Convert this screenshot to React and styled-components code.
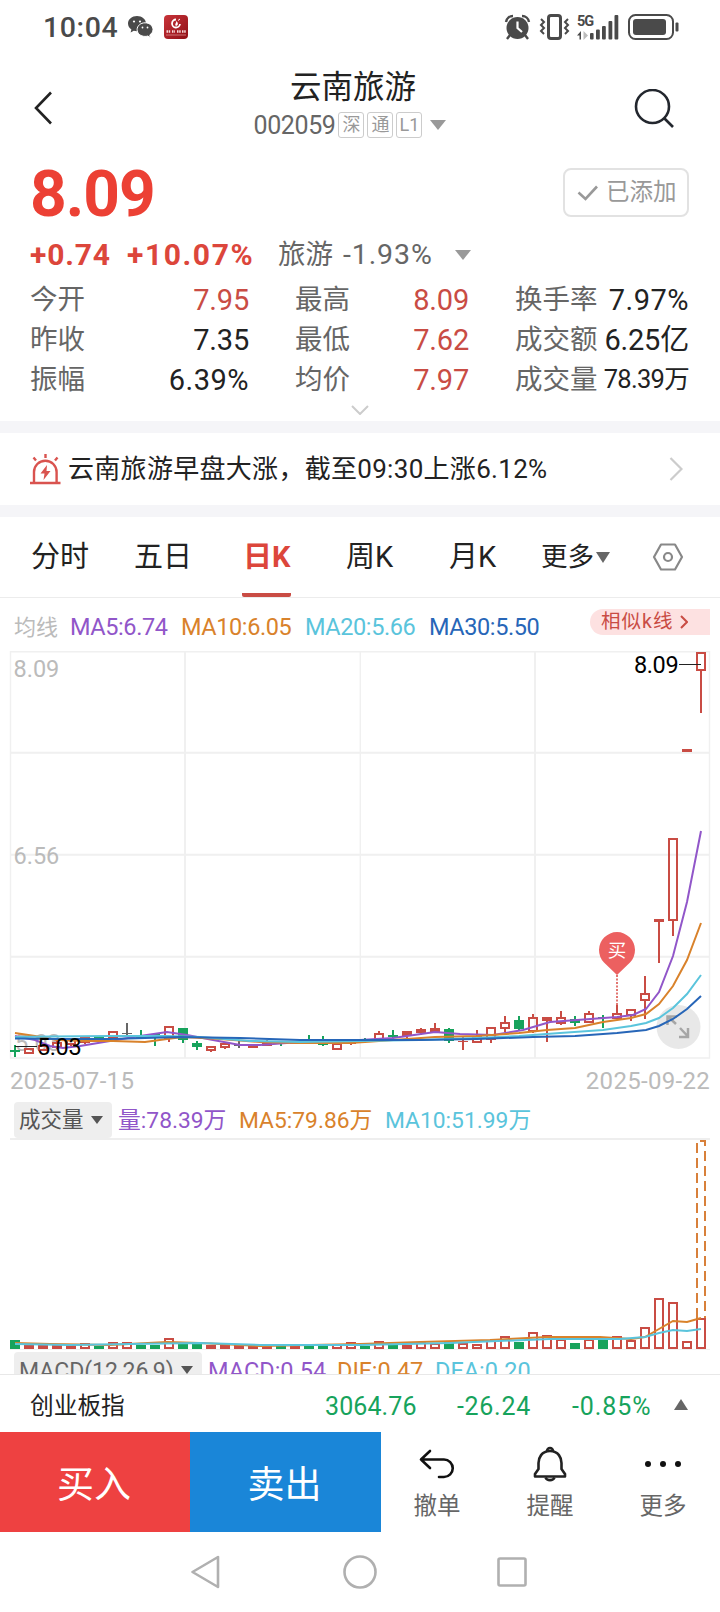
import React from "react";
import styled, { createGlobalStyle } from "styled-components";

const GlobalStyle = createGlobalStyle`
  * {
    box-sizing: border-box;
  }

  body {
    margin: 0;
    background: #fff;
    font-family: Roboto, "Noto Sans CJK SC", sans-serif;
    color: #222;
  }

  svg {
    display: block;
    flex-shrink: 0;
  }
`;

const RED = "#c94c44";
const GREEN = "#17a35c";
const PURPLE = "#9156c9";
const ORANGE = "#d9822b";
const CYAN = "#5ac4dc";
const BLUE = "#2766b8";

const Screen = styled.div`
  width: 720px;
  height: 1612px;
  display: flex;
  flex-direction: column;
  overflow: hidden;
`;

const Text = styled.span`
  display: block;
  width: ${(p) => (p.$w ? `${p.$w}px` : "auto")};
  padding-top: ${(p) => p.$top || 0}px;
  font-size: ${(p) => p.$size}px;
  line-height: 1;
  color: ${(p) => p.$color || "#222"};
  font-weight: ${(p) => p.$weight || 400};
  letter-spacing: ${(p) => p.$spacing || 0}px;
  white-space: nowrap;
`;

const StatusBar = styled.div`
  height: 54px;
  padding: 0 40px 0 43px;
  display: flex;
  align-items: center;
  justify-content: space-between;
`;
const StatusGroup = styled.div`
  display: flex;
  align-items: center;
  gap: 10px;
`;

const Header = styled.header`
  height: 102px;
  padding: 0 46px 0 34px;
  display: flex;
  justify-content: space-between;
`;
const HeaderIcon = styled.div`
  width: 60px;
  padding-top: ${(p) => p.$top}px;
  display: flex;
  justify-content: ${(p) => p.$align};
`;
const TitleBlock = styled.div`
  display: flex;
  flex-direction: column;
  align-items: center;
  padding: 18px 2px 0 0;
  gap: 8px;
`;
const CodeRow = styled.div`
  display: flex;
  align-items: center;
  margin-left: -6px;
`;
const Badge = styled.span`
  width: 26px;
  height: 26px;
  margin-left: 3px;
  border: 1px solid #ccc;
  border-radius: 3px;
  display: flex;
  align-items: center;
  justify-content: center;
  font-size: 18px;
  line-height: 1;
  color: #999;
`;
const Triangle = styled.i`
  width: 0;
  height: 0;
  border-left: ${(p) => p.$w / 2}px solid transparent;
  border-right: ${(p) => p.$w / 2}px solid transparent;
  ${(p) => (p.$up ? "border-bottom" : "border-top")}: ${(p) => p.$h}px solid ${(p) => p.$color || "#999"};
  margin-left: ${(p) => p.$left || 0}px;
`;

const Quote = styled.section`
  height: 265px;
  padding: 12px 31px 0 30px;
`;
const PriceRow = styled.div`
  height: 68px;
  display: flex;
  justify-content: space-between;
`;
const Price = styled(Text)`
  margin-top: -5px;
`;
const AddedButton = styled.button`
  width: 126px;
  height: 49px;
  padding: 0 0 0 12px;
  display: flex;
  align-items: center;
  gap: 7px;
  background: #fff;
  border: 2px solid #e2e2e2;
  border-radius: 8px;
  font-family: inherit;
`;
const ChangeRow = styled.div`
  height: 38px;
  display: flex;
  align-items: center;
`;
const Stats = styled.div`
  display: grid;
  grid-template-columns: 219px 174px 174px;
  grid-auto-rows: 40px;
  column-gap: 46px;
  margin-top: 6px;
`;
const Stat = styled.div`
  display: flex;
  align-items: center;
  justify-content: space-between;
`;
const Expand = styled.div`
  display: flex;
  justify-content: center;
  padding-top: 5px;
`;

const Band = styled.div`
  height: 12px;
  background: #f5f5f8;
`;
const Alert = styled.section`
  height: 72px;
  padding: 0 37px 0 30px;
  display: flex;
  align-items: center;
`;
const AlertText = styled.div`
  flex: 1;
  padding-left: 7px;
`;

const Tabs = styled.nav`
  height: 81px;
  border-bottom: 1px solid #ececec;
  padding: 0 36px 0 30px;
  display: flex;
`;
const Tab = styled.div`
  width: ${(p) => p.$w}px;
  height: 80px;
  display: flex;
  align-items: center;
`;
const TabLabel = styled.div`
  height: 80px;
  display: flex;
  align-items: center;
  border-bottom: 4px solid ${(p) => (p.$active ? RED : "transparent")};
  border-radius: 2px;
  padding: 5px 1px 0;
`;

const Legend = styled.div`
  height: ${(p) => p.$h}px;
  padding: ${(p) => p.$top || 0}px 10px 0 14px;
  display: flex;
  align-items: center;
`;
const LegendItem = styled(Text)`
  padding-top: 4px;
`;
const Similar = styled.div`
  width: 120px;
  height: 26px;
  margin-left: auto;
  margin-top: -8px;
  padding-left: 11px;
  display: flex;
  align-items: center;
  gap: 7px;
  background: #fde1e1;
  border-radius: 13px 0 0 13px;
`;
const Dates = styled.div`
  height: 41px;
  padding: 2px 10px 0;
  display: flex;
  align-items: center;
  justify-content: space-between;
`;
const Chip = styled.div`
  width: ${(p) => p.$w}px;
  height: 36px;
  margin-right: 6px;
  padding-left: 5px;
  display: flex;
  align-items: center;
  background: #eee;
  border-radius: 4px;
`;
const Clip = styled.div`
  height: 24px;
  overflow: hidden;
`;

const IndexBar = styled.div`
  height: 58px;
  border-top: 1px solid #e8e8e8;
  padding: 2px 30px 0;
  display: flex;
  align-items: center;
`;

const Actions = styled.div`
  height: 100px;
  display: flex;
`;
const Trade = styled.button`
  width: ${(p) => p.$w}px;
  border: 0;
  padding: 0 2px 1px 0;
  background: ${(p) => p.$bg};
  color: #fff;
  font-family: inherit;
  font-size: 37px;
`;
const Tools = styled.div`
  display: flex;
`;
const Tool = styled.div`
  width: 113px;
  padding: 13px 1px 0 0;
  display: flex;
  flex-direction: column;
  align-items: center;
  gap: 10px;
`;
const NavBar = styled.div`
  height: 80px;
  display: flex;
  align-items: center;
  justify-content: center;
  gap: 118px;
`;

const stats = [
  ["今开", "7.95", true],
  ["最高", "8.09", true],
  ["换手率", "7.97%"],
  ["昨收", "7.35"],
  ["最低", "7.62", true],
  ["成交额", "6.25亿"],
  ["振幅", "6.39%"],
  ["均价", "7.97", true],
  ["成交量", "78.39万"],
];

// kind, high, body top, body bottom, low, volume top
// r: hollow rise, s: filled rise, g: fall, x: flat
const candles = [
  ["g", 1045, 1050, 1052, 1057, 1340],
  ["r", 1048, 1049, 1053, 1053, 1346],
  ["r", 1044, 1046, 1050, 1050, 1346],
  ["r", 1041, 1043, 1047, 1049, 1346],
  ["r", 1039, 1040, 1044, 1046, 1346],
  ["r", 1037, 1038, 1042, 1044, 1344],
  ["g", 1036, 1037, 1040, 1041, 1346],
  ["r", 1032, 1032, 1037, 1037, 1343],
  ["x", 1023, 1033, 1034, 1036, 1343],
  ["g", 1030, 1036, 1038, 1038, 1345],
  ["g", 1033, 1034, 1037, 1046, 1345],
  ["r", 1027, 1027, 1038, 1042, 1339],
  ["g", 1028, 1028, 1040, 1043, 1344],
  ["g", 1041, 1043, 1047, 1050, 1344],
  ["r", 1047, 1047, 1050, 1052, 1346],
  ["r", 1042, 1044, 1047, 1049, 1346],
  ["x", 1041, 1045, 1046, 1048, 1346],
  ["r", 1044, 1045, 1047, 1047, 1346],
  ["r", 1040, 1043, 1045, 1046, 1346],
  ["g", 1041, 1042, 1044, 1046, 1346],
  ["r", 1041, 1042, 1043, 1043, 1346],
  ["g", 1035, 1039, 1041, 1043, 1346],
  ["g", 1036, 1042, 1045, 1046, 1346],
  ["r", 1043, 1044, 1049, 1050, 1345],
  ["r", 1041, 1042, 1043, 1045, 1343],
  ["g", 1038, 1039, 1041, 1042, 1346],
  ["r", 1031, 1034, 1040, 1042, 1342],
  ["g", 1030, 1035, 1037, 1039, 1345],
  ["s", 1031, 1031, 1036, 1038, 1346],
  ["s", 1028, 1029, 1033, 1035, 1343],
  ["s", 1023, 1028, 1032, 1032, 1344],
  ["g", 1028, 1029, 1041, 1043, 1341],
  ["s", 1036, 1041, 1042, 1050, 1344],
  ["r", 1030, 1037, 1042, 1042, 1345],
  ["r", 1027, 1028, 1039, 1043, 1341],
  ["r", 1016, 1023, 1028, 1032, 1337],
  ["g", 1016, 1020, 1029, 1031, 1342],
  ["r", 1014, 1018, 1031, 1033, 1333],
  ["s", 1017, 1017, 1021, 1042, 1336],
  ["r", 1011, 1018, 1023, 1025, 1340],
  ["g", 1016, 1019, 1023, 1026, 1343],
  ["r", 1011, 1014, 1022, 1022, 1340],
  ["g", 1015, 1017, 1018, 1028, 1340],
  ["r", 1005, 1014, 1018, 1018, 1337],
  ["r", 1010, 1010, 1015, 1021, 1341],
  ["r", 976, 994, 1000, 1019, 1328],
  ["s", 919, 919, 922, 963, 1299],
  ["r", 839, 839, 920, 936, 1303],
  ["s", 749, 749, 752, 752, 1342],
  ["r", 653, 653, 670, 713, 1319],
];

const ma5 =
  "15,1036 35,1040 50,1046 63,1048 80,1046 110,1041 140,1036 167,1032 187,1035 213,1040 240,1045 260,1045 300,1042 360,1040 393,1038 435,1032 460,1034 493,1035 523,1030 550,1022 577,1020 617,1017 633,1015 646,1009 659,992 673,956 687,902 701,831";
const ma10 =
  "15,1033 35,1036 57,1040 85,1041 113,1041 145,1042 167,1039 183,1037 220,1039 260,1042 300,1043 350,1043 365,1042 407,1039 435,1037 477,1036 519,1033 547,1030 575,1028 603,1022 631,1018 646,1014 659,1004 673,986 687,960 701,923";
const ma20 =
  "15,1037 50,1036.5 110,1036 167,1036 200,1037 250,1041 300,1042 360,1041 420,1040 477,1038 519,1036 560,1033 603,1030 631,1026 646,1023 659,1018 673,1008 687,994 701,975";
const ma30 =
  "15,1038.5 60,1039 110,1039 180,1037 240,1038 300,1040 360,1040 420,1040 477,1039 533,1037 575,1036 617,1033 646,1030 659,1026 673,1019 687,1009 701,996";
const vol5 =
  "15,1343 50,1344 110,1345 167,1342 200,1343 260,1346 360,1344 420,1342 490,1340 547,1337 600,1337 631,1339 645,1337 659,1329 673,1321 687,1322 701,1318";
const vol10 =
  "15,1344 70,1345 130,1344 200,1343 260,1345 360,1345 450,1343 550,1339 620,1339 645,1337 659,1333 673,1330 687,1331 701,1329";

const kindColor = (kind) => {
  if (kind === "g") return GREEN;
  if (kind === "x") return "#666";
  return RED;
};

const valueSpacing = (value) => {
  if (value.includes("万")) return -0.7;
  if (value.includes("%")) return 0.5;
  return -0.2;
};

function Line({ points, color }) {
  return <polyline points={points} fill="none" stroke={color} strokeWidth="2" />;
}

function Candle({ data, x }) {
  const [kind, high, top, bottom, low] = data;
  const color = kindColor(kind);
  return (
    <g fill={color} stroke="none">
      {high < top && <rect x={x - 1} y={high} width="2" height={top - high} />}
      {low > bottom && <rect x={x - 1} y={bottom} width="2" height={low - bottom} />}
      {kind === "r" ? (
        <rect x={x - 4} y={top} width="8" height={Math.max(bottom - top, 1)} fill="none" stroke={color} strokeWidth="2" />
      ) : (
        <rect x={x - 5} y={top} width="10" height={bottom - top} />
      )}
    </g>
  );
}

function PriceChart() {
  return (
    <svg width="720" height="408" viewBox="0 651 720 408" fontFamily="Roboto, 'Noto Sans CJK SC', sans-serif">
      <g stroke="#f0f0f0" strokeWidth="2" fill="none">
        <path d="M11 752.7H709M11 854.7H709M11 956.7H709M185 652V1058M535 652V1058" />
        <path d="M10.5 651.7H709.5V1058H10.5ZM360.3 652V1058" strokeWidth="1.4" />
      </g>
      <g fontSize="23.5" fill="#bbb">
        <text x="13.5" y="677">8.09</text>
        <text x="13.5" y="864">6.56</text>
        <text x="15" y="1051">5.03</text>
      </g>
      {candles.map((c, i) => (
        <Candle key={i} data={c} x={15 + i * 14} />
      ))}
      <circle cx="678.5" cy="1027" r="22" fill="#e6e6e6" fillOpacity=".9" />
      <g stroke="#a6a6a6" strokeWidth="2.5" fill="none">
        <path d="M676 1024L668 1016.5M667.5 1025V1016.500H677" />
        <path d="M680 1028L688 1036.5M679 1037H688V1028" />
      </g>
      <Line points={ma5} color={PURPLE} />
      <Line points={ma10} color={ORANGE} />
      <Line points={ma20} color={CYAN} />
      <Line points={ma30} color={BLUE} />
      <path d="M617 975V1005" stroke="#e27570" strokeWidth="2" strokeDasharray="2 1.5" />
      <path d="M617 975L604 962.5A18 18 0 1 1 630 962.5Z" fill="#ec6060" />
      <text x="617" y="957" fontSize="18.5" fill="#fff" textAnchor="middle">买</text>
      <g fontSize="23.5" fill="#000" letterSpacing="-.4">
        <text x="634" y="673">8.09</text>
        <text x="37" y="1054.5">5.03</text>
      </g>
      <path d="M679 664.5H701M15 1046.5H37" stroke="#222" strokeWidth="1.2" />
    </svg>
  );
}

function VolumeChart() {
  return (
    <svg width="720" height="212" viewBox="0 1138 720 212">
      <path d="M10 1139H710" stroke="#eee" strokeWidth="2" />
      <path d="M10 1349.5H710" stroke="#f0f0f0" />
      {candles.map((c, i) => {
        const x = 15 + i * 14;
        const top = c[5];
        return c[0] === "g" ? (
          <rect key={i} x={x - 5} y={top} width="10" height={1349 - top} fill={GREEN} />
        ) : (
          <rect key={i} x={x - 4} y={top} width="8" height={1348 - top} fill="#fff" stroke={RED} strokeWidth="2" />
        );
      })}
      {/* projected volume for the running day */}
      <path d="M697 1318V1141H705V1318" fill="none" stroke="#d8803a" strokeWidth="2" strokeDasharray="10 5" />
      <Line points={vol5} color={ORANGE} />
      <Line points={vol10} color={CYAN} />
    </svg>
  );
}

function StatusIcons() {
  return (
    <svg width="176" height="28" viewBox="504 13 176 28" fill="#4a4a4a">
      <circle cx="517.5" cy="28" r="11" />
      <path d="M506 22a7 7 0 0 1 7-6M529 22a7 7 0 0 0-7-6M510 35l-3 4M525 35l3 4" stroke="#4a4a4a" strokeWidth="2.4" fill="none" />
      <path d="M517.5 21.5V28L522 32" stroke="#fff" strokeWidth="2.2" fill="none" />
      <rect x="548.5" y="15.5" width="12" height="23" rx="2.5" fill="none" stroke="#4a4a4a" strokeWidth="3" />
      <path d="M541 19l3 3-3 3 3 3-3 3 3 3M568 19l-3 3 3 3-3 3 3 3-3 3" fill="none" stroke="#4a4a4a" strokeWidth="2" />
      <text x="577" y="26" fontSize="14.5" fontWeight="700" fontFamily="Roboto" letterSpacing="-1">5G</text>
      <path d="M577 35.5L581 31V39.5H579.5V35.5Z" />
      <path d="M583.5 31V40L588 35.5Z" fill="#bbb" />
      <rect x="590" y="33" width="3.6" height="6.5" rx="1" />
      <rect x="596" y="29.5" width="3.8" height="10" rx="1" />
      <rect x="602" y="26" width="3.8" height="13.5" rx="1" />
      <rect x="608.5" y="21" width="3.8" height="18.5" rx="1" />
      <rect x="614.5" y="15" width="3.8" height="24.5" rx="1" />
      <rect x="629" y="15" width="44" height="24" rx="6.5" fill="none" stroke="#4a4a4a" strokeWidth="2" />
      <rect x="633" y="19" width="33" height="16" rx="3" />
      <rect x="675.5" y="22.5" width="3" height="9" rx="1" />
    </svg>
  );
}

function AppBadge() {
  return (
    <svg width="24" height="24" viewBox="0 0 24 24">
      <defs>
        <linearGradient id="appred" x1="0" y1="0" x2="1" y2="1">
          <stop offset="0" stopColor="#c9343a" />
          <stop offset="1" stopColor="#8f0f16" />
        </linearGradient>
      </defs>
      <rect width="24" height="24" rx="4" fill="url(#appred)" />
      <path d="M12 4.5a4 4 0 1 0 4 4.5" fill="none" stroke="#fff" strokeWidth="1.8" />
      <path d="M12 11c-2-2 1-3 0-5 2 1 3 4 0 5z" fill="#fff" />
      <path d="M14 5.5l2-1.5" stroke="#fff" strokeWidth="1" />
      <path d="M2.5 16.5h4M8 16.5h3M13 16.5h4M18 16.5h4" stroke="#f6dada" strokeWidth="2.5" strokeDasharray="1.5 .7" />
      <path d="M2 20h20" stroke="#d98c8c" strokeWidth=".8" />
    </svg>
  );
}

function WeChat() {
  return (
    <svg width="26" height="22" viewBox="0 0 26 22">
      <path d="M9 0C4 0 0 3.3 0 7.5c0 2.500 1.3 4.6 3.4 6L2.6 16.5l3.2-1.7c1 .3 2 .4 3.2.4C14 15.2 18 12 18 7.6S14 0 9 0z" fill="#4a4a4a" />
      <path d="M17 6.8c-4.4 0-7.9 3-7.9 6.8s3.5 6.8 7.9 6.8c1 0 1.9-.1 2.7-.4l2.7 1.5-.6-2.6c1.9-1.2 3.2-3.1 3.2-5.3 0-3.8-3.6-6.8-8-6.8z" fill="#4a4a4a" stroke="#fff" strokeWidth="1" />
      <g fill="#fff">
        <circle cx="6" cy="5.5" r="1.1" />
        <circle cx="12" cy="5.5" r="1.1" />
        <circle cx="14.5" cy="11.5" r=".9" />
        <circle cx="19.5" cy="11.5" r=".9" />
      </g>
    </svg>
  );
}

function App() {
  return (
    <>
      <GlobalStyle />
      <Screen>
        <StatusBar>
          <StatusGroup>
            <Text $size={28.5} $weight={500} $color="#4a4a4a" $spacing={0.6} $top={2}>10:04</Text>
            <WeChat />
            <AppBadge />
          </StatusGroup>
          <StatusIcons />
        </StatusBar>

        <Header>
          <HeaderIcon $align="flex-start" $top={37}>
            <svg width="20" height="34" viewBox="0 0 20 34" fill="none" stroke="#222" strokeWidth="2.6">
              <path d="M17 1.5L2 17L17 32.5" />
            </svg>
          </HeaderIcon>
          <TitleBlock>
            <Text $size={31.5}>云南旅游</Text>
            <CodeRow>
              <Text $size={25} $color="#666" $spacing={-0.4} $top={1}>002059</Text>
              <Badge>深</Badge>
              <Badge>通</Badge>
              <Badge>L1</Badge>
              <Triangle $w={16} $h={10} $left={8} />
            </CodeRow>
          </TitleBlock>
          <HeaderIcon $align="flex-end" $top={35}>
            <svg width="40" height="40" viewBox="634 89 40 40" fill="none" stroke="#23272e" strokeWidth="2.6">
              <circle cx="652.5" cy="106.5" r="16.5" />
              <path d="M664 118L673 127" />
            </svg>
          </HeaderIcon>
        </Header>

        <Quote>
          <PriceRow>
            <Price $size={64} $weight={700} $color="#ec4034" $spacing={-1}>8.09</Price>
            <AddedButton>
              <svg width="22" height="16" viewBox="0 0 22 16" fill="none" stroke="#999" strokeWidth="2.6">
                <path d="M1.5 7.5L8.5 14L20 1.5" />
              </svg>
              <Text $size={23.5} $color="#999">已添加</Text>
            </AddedButton>
          </PriceRow>
          <ChangeRow>
            <Text $w={97} $size={30} $weight={700} $color="#dc463b" $spacing={0.8}>+0.74</Text>
            <Text $w={151} $size={30} $weight={700} $color="#dc463b" $spacing={1.6}>+10.07%</Text>
            <Text $w={65} $size={27.5} $color="#666">旅游</Text>
            <Text $w={112} $size={28.5} $color="#666" $spacing={0.9}>-1.93%</Text>
            <Triangle $w={16} $h={10} />
          </ChangeRow>
          <Stats>
            {stats.map(([label, value, up]) => (
              <Stat key={label}>
                <Text $size={27.5} $color="#666">{label}</Text>
                <Text $size={value.includes("万") ? 25.5 : 29} $spacing={valueSpacing(value)} $color={up ? RED : "#222"}>
                  {value}
                </Text>
              </Stat>
            ))}
          </Stats>
          <Expand>
            <svg width="18" height="10" viewBox="0 0 18 10" fill="none" stroke="#ccc" strokeWidth="2">
              <path d="M1 1L9 9L17 1" />
            </svg>
          </Expand>
        </Quote>

        <Band />
        <Alert>
          <svg width="31" height="31" viewBox="0 0 31 31" fill="none" stroke="#d9534f" strokeWidth="2.4">
            <path d="M0 29H30.5M4 29V18a11.3 11.3 0 0 1 22.6 0V29M15.5 0V4M3.5 3.5L6 6.5M27.5 3.5L25 6.5" />
            <path d="M17 11L10.5 19.5H14.5L13.5 26L20.5 17H16.5Z" fill="#d9534f" stroke="none" />
          </svg>
          <AlertText>
            <Text $size={26} $spacing={0.3}>云南旅游早盘大涨，截至09:30上涨6.12%</Text>
          </AlertText>
          <svg width="14" height="24" viewBox="0 0 14 24" fill="none" stroke="#ccc" strokeWidth="2.2">
            <path d="M1.5 1L12.5 12L1.5 23" />
          </svg>
        </Alert>
        <Band />

        <Tabs>
          <Tab $w={103}>
            <TabLabel><Text $size={29}>分时</Text></TabLabel>
          </Tab>
          <Tab $w={109}>
            <TabLabel><Text $size={29}>五日</Text></TabLabel>
          </Tab>
          <Tab $w={103}>
            <TabLabel $active><Text $size={29} $weight={700} $color="#dc463b">日K</Text></TabLabel>
          </Tab>
          <Tab $w={103}>
            <TabLabel><Text $size={29}>周K</Text></TabLabel>
          </Tab>
          <Tab $w={92}>
            <TabLabel><Text $size={29}>月K</Text></TabLabel>
          </Tab>
          <Tab $w={112}>
            <TabLabel><Text $size={26.5}>更多</Text></TabLabel>
            <Triangle $w={15} $h={11} $left={1} $color="#666" />
          </Tab>
          <Tab $w={32}>
            <svg width="32" height="28" viewBox="0 0 32 28" fill="none" stroke="#888" strokeWidth="2.2">
              <path d="M9 1.5H23L30 14L23 26.5H9L2 14Z" strokeLinejoin="round" />
              <circle cx="16" cy="14" r="4" />
            </svg>
          </Tab>
        </Tabs>

        <Legend $h={53} $top={3}>
          <LegendItem $w={56} $size={22} $color="#bbb">均线</LegendItem>
          <LegendItem $w={111} $size={23.5} $spacing={-0.4} $color={PURPLE}>MA5:6.74</LegendItem>
          <LegendItem $w={124} $size={23.5} $spacing={-0.4} $color={ORANGE}>MA10:6.05</LegendItem>
          <LegendItem $w={124} $size={23.5} $spacing={-0.4} $color={CYAN}>MA20:5.66</LegendItem>
          <LegendItem $w={112} $size={23.5} $spacing={-0.4} $color={BLUE}>MA30:5.50</LegendItem>
          <Similar>
            <Text $size={19.5} $color={RED} $spacing={1}>相似k线</Text>
            <svg width="8" height="14" viewBox="0 0 8 14" fill="none" stroke={RED} strokeWidth="2">
              <path d="M1 1L7 7L1 13" />
            </svg>
          </Similar>
        </Legend>
        <PriceChart />
        <Dates>
          <Text $size={24} $color="#bbb" $spacing={0.3}>2025-07-15</Text>
          <Text $size={24} $color="#bbb" $spacing={0.3}>2025-09-22</Text>
        </Dates>

        <Legend $h={38} $top={1}>
          <Chip $w={98}>
            <Text $size={21.5} $color="#555" $top={1}>成交量</Text>
            <Triangle $w={12} $h={8} $left={7} $color="#555" />
          </Chip>
          <LegendItem $w={121} $size={22.8} $color={PURPLE}>量:78.39万</LegendItem>
          <LegendItem $w={146} $size={22.8} $color={ORANGE}>MA5:79.86万</LegendItem>
          <LegendItem $w={160} $size={22.8} $color={CYAN}>MA10:51.99万</LegendItem>
        </Legend>
        <VolumeChart />

        <Clip>
          <Legend $h={38} $top={1}>
            <Chip $w={188}>
              <Text $size={23} $color="#666" $top={4}>MACD(12,26,9)</Text>
              <Triangle $w={12} $h={8} $left={7} $color="#555" />
            </Chip>
            <LegendItem $w={129} $size={23.5} $color={PURPLE}>MACD:0.54</LegendItem>
            <LegendItem $w={98} $size={23.5} $color={ORANGE}>DIF:0.47</LegendItem>
            <LegendItem $w={110} $size={23.5} $color={CYAN}>DEA:0.20</LegendItem>
          </Legend>
        </Clip>

        <IndexBar>
          <LegendItem $w={295} $size={23.7}>创业板指</LegendItem>
          <LegendItem $w={132} $size={25} $color={GREEN} $spacing={0.1}>3064.76</LegendItem>
          <LegendItem $w={115} $size={25} $color={GREEN} $spacing={0.7}>-26.24</LegendItem>
          <LegendItem $w={102} $size={25} $color={GREEN} $spacing={0.9}>-0.85%</LegendItem>
          <Triangle $up $w={15} $h={11} $color="#666" />
        </IndexBar>

        <Actions>
          <Trade $w={190} $bg="#ee4141">买入</Trade>
          <Trade $w={191} $bg="#1a86d8">卖出</Trade>
          <Tools>
            <Tool>
              <svg width="38" height="40" viewBox="418 1445 38 40" fill="none" stroke="#111" strokeWidth="2.6" strokeLinecap="round" strokeLinejoin="round">
                <path d="M430 1451L421 1459.5L430 1468M421 1459.5H444A8.7 8.7 0 0 1 444 1477H439" />
              </svg>
              <Text $size={23.5} $color="#666">撤单</Text>
            </Tool>
            <Tool>
              <svg width="38" height="40" viewBox="531.5 1445 38 40" fill="none" stroke="#222" strokeWidth="2.6" strokeLinejoin="round">
                <path d="M550.5 1451C542 1451 539 1458 539 1463V1469L535.5 1474V1476.5H565.5V1474L562 1469V1463C562 1458 559 1451 550.5 1451Z" />
                <path d="M547.5 1451A3 3 0 0 1 553.5 1451M546 1477.5A4.8 4 0 0 0 555 1477.5" />
              </svg>
              <Text $size={23.5} $color="#666">提醒</Text>
            </Tool>
            <Tool>
              <svg width="38" height="40" viewBox="644 1445 38 40" fill="#111">
                <circle cx="648" cy="1464" r="3" />
                <circle cx="663" cy="1464" r="3" />
                <circle cx="678" cy="1464" r="3" />
              </svg>
              <Text $size={23.5} $color="#666">更多</Text>
            </Tool>
          </Tools>
        </Actions>

        <NavBar>
          <svg width="34" height="34" viewBox="4 0 34 34" fill="none" stroke="#b0b0b0" strokeWidth="2.6" strokeLinejoin="round">
            <path d="M5.5 17L31 2V32Z" />
          </svg>
          <svg width="34" height="34" viewBox="0 0 34 34" fill="none" stroke="#b0b0b0" strokeWidth="2.6">
            <circle cx="17" cy="17" r="15.5" />
          </svg>
          <svg width="34" height="34" viewBox="0 0 34 34" fill="none" stroke="#b0b0b0" strokeWidth="2.6">
            <rect x="3.5" y="3.5" width="27" height="27" rx="1.5" />
          </svg>
        </NavBar>
      </Screen>
    </>
  );
}

export default App;
